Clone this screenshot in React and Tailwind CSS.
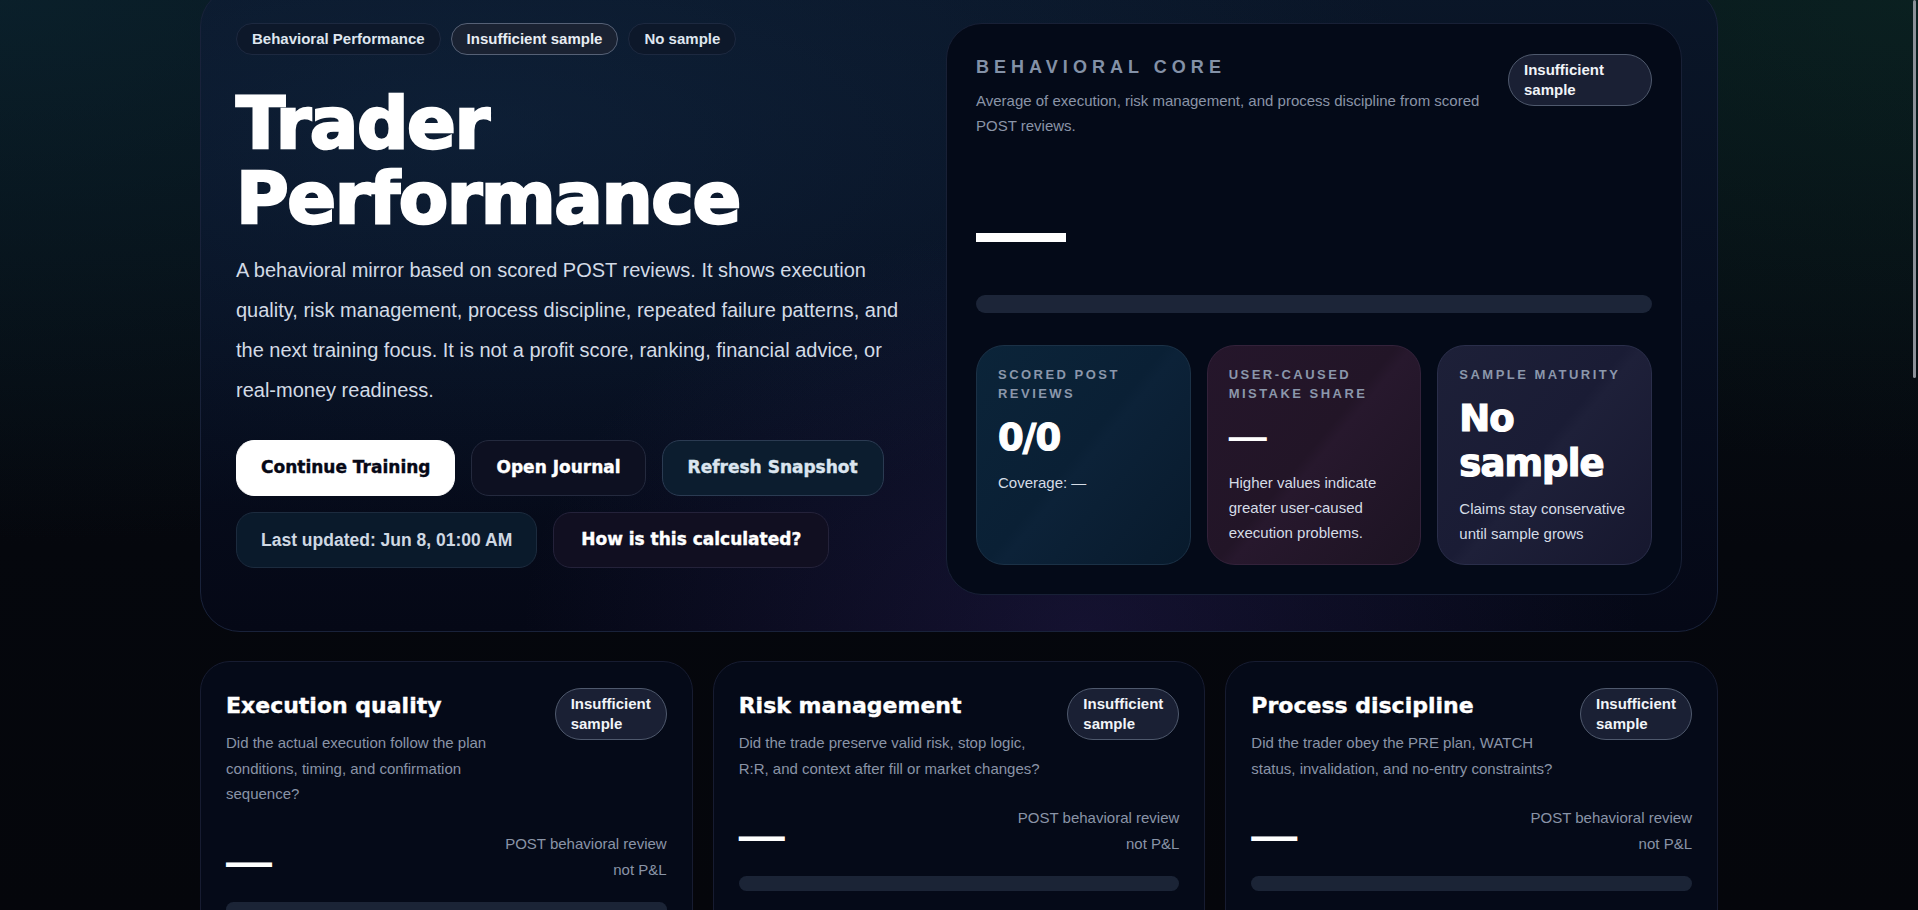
import React from 'react';

const heavy = "font-['DejaVu_Sans',sans-serif] font-bold";

const pills = [
  { label: 'Behavioral Performance', tone: 'border-[#1d2940] bg-[#0d182a] text-[#dfe6ef]' },
  { label: 'Insufficient sample', tone: 'border-[#566176] bg-[#1a2232] text-[#e8edf3]' },
  { label: 'No sample', tone: 'border-[#1d2940] bg-[#0d182a] text-[#dfe6ef]' },
];

const tiles = [
  {
    label: 'Scored POST reviews',
    value: '0/0',
    note: 'Coverage: —',
    tone: 'border-[#1b3146] bg-[linear-gradient(130deg,#0b2439_0%,#0a2035_48%,#0c2238_52%,#081a2c_100%)]',
  },
  {
    label: 'User-caused mistake share',
    value: '—',
    note: 'Higher values indicate greater user-caused execution problems.',
    tone: 'border-[#33223a] bg-[linear-gradient(130deg,#25162b_0%,#221527_48%,#27182d_52%,#1c1322_100%)]',
  },
  {
    label: 'Sample maturity',
    value: 'No sample',
    note: 'Claims stay conservative until sample grows',
    tone: 'border-[#2a2e4a] bg-[linear-gradient(130deg,#1d2038_0%,#1a1c35_48%,#1e2039_52%,#16172e_100%)]',
  },
];

const dimensions = [
  {
    title: 'Execution quality',
    text: 'Did the actual execution follow the plan conditions, timing, and confirmation sequence?',
  },
  {
    title: 'Risk management',
    text: 'Did the trade preserve valid risk, stop logic, R:R, and context after fill or market changes?',
  },
  {
    title: 'Process discipline',
    text: 'Did the trader obey the PRE plan, WATCH status, invalidation, and no-entry constraints?',
  },
];

function SampleBadge({ width }) {
  return (
    <span className={`${width} shrink-0 rounded-[26px] border border-[#4f596d] bg-[#1a2034] px-[15px] py-[5px] text-[15px] font-bold leading-5 text-[#f1f4f8]`}>
      Insufficient sample
    </span>
  );
}

function DimensionCard({ title, text }) {
  return (
    <div className="rounded-[30px] border border-[#171c31] bg-[#050a18] px-[25px] pt-[26px] pb-8">
      <div className="flex items-start gap-6">
        <div className="min-w-0 flex-1">
          <h3 className={`${heavy} text-[22px] leading-[36px] text-white [-webkit-text-stroke:0.4px_currentColor]`}>{title}</h3>
          <p className="mt-1.5 text-[15px] leading-[25.5px] text-[#8a94a7]">{text}</p>
        </div>
        <SampleBadge width="w-[112px]" />
      </div>
      <div className="mt-6 flex items-end justify-between">
        <span className="text-[46px] font-bold leading-[44px] text-white">—</span>
        <p className="text-right text-[15px] leading-[26px] text-[#8a94a7]">
          POST behavioral review
          <br />
          not P&amp;L
        </p>
      </div>
      <div className="mt-[19px] h-[15px] rounded-full bg-[#1b2436]" />
    </div>
  );
}

export default function App() {
  return (
    <div className="relative h-screen overflow-hidden bg-[radial-gradient(ellipse_at_0%_0%,rgba(14,48,62,0.45),transparent_42%),radial-gradient(ellipse_at_100%_0%,rgba(16,58,44,0.35),transparent_36%),linear-gradient(180deg,#07121a_0%,#05070d_60%,#05060b_100%)] font-['Liberation_Sans',Arial,sans-serif] text-white">
      {/* scrollbar thumb */}
      <div className="fixed right-[2px] top-0 h-[378px] w-[3px] rounded-full bg-[#8c9199]" />

      <div className="mx-auto max-w-[1518px]">
        <section className="mt-[-13px] grid grid-cols-[minmax(0,1fr)_736px] gap-9 rounded-[40px] border border-[#19223a] bg-[radial-gradient(ellipse_at_58%_100%,rgba(76,52,140,0.22),transparent_45%),radial-gradient(ellipse_at_18%_22%,rgba(22,52,84,0.35),transparent_55%),linear-gradient(180deg,#0a1628_0%,#070f20_50%,#050816_100%)] pl-[35px] pr-[35px] pt-[35px] pb-[36px]">
          <div>
            <div className="flex gap-2.5">
              {pills.map((p) => (
                <span key={p.label} className={`flex h-8 items-center rounded-full border px-[15px] text-[15px] font-bold ${p.tone}`}>
                  {p.label}
                </span>
              ))}
            </div>

            <h1 className={`${heavy} mt-[31px] text-[72px] tracking-[-0.02em] text-white [-webkit-text-stroke:2.5px_currentColor]`}>
              <span className="block h-[75px] leading-[75px]">Trader</span>
              <span className="block h-[75px] leading-[75px]">Performance</span>
            </h1>

            <p className="mt-3.5 text-[20px] leading-10 text-[#d3dbe6]">
              A behavioral mirror based on scored POST reviews. It shows execution quality, risk management, process discipline, repeated failure patterns, and the next training focus. It is not a profit score, ranking, financial advice, or real-money readiness.
            </p>

            <div className="mt-[30px] flex flex-wrap gap-4">
              <button className={`${heavy} h-14 rounded-[18px] border border-white bg-white px-6 text-[17px] text-[#060816] [-webkit-text-stroke:0.4px_currentColor]`}>
                Continue Training
              </button>
              <button className={`${heavy} h-14 rounded-[18px] border border-[#242a3e] bg-[#0d1021] px-6 text-[17px] text-white [-webkit-text-stroke:0.4px_currentColor]`}>
                Open Journal
              </button>
              <button className={`${heavy} h-14 rounded-[18px] border border-[#2b3b52] bg-[#0c1d2f] px-[25px] text-[17px] text-[#dbe5ef] [-webkit-text-stroke:0.4px_currentColor]`}>
                Refresh Snapshot
              </button>
              <div className="flex h-14 items-center rounded-[18px] border border-[#1c2b3e] bg-[#0a1a2b] px-6 text-[17.5px] font-bold text-[#cfd8e3]">
                Last updated: Jun 8, 01:00 AM
              </div>
              <button className={`${heavy} h-14 rounded-[18px] border border-[#24223a] bg-[#110f21] px-[27px] text-[17px] text-white [-webkit-text-stroke:0.4px_currentColor]`}>
                How is this calculated?
              </button>
            </div>
          </div>

          <div className="rounded-[36px] border border-[#182036] bg-[#040a18] px-[29px] pt-[30px] pb-[29px]">
            <div className="flex items-start gap-5">
              <div className="min-w-0 flex-1">
                <h2 className="text-[18px] font-bold uppercase leading-[26px] tracking-[0.28em] text-[#8391a7]">
                  Behavioral Core
                </h2>
                <p className="mt-2 text-[15px] leading-[25px] text-[#8a94a7]">
                  Average of execution, risk management, and process discipline from scored POST reviews.
                </p>
              </div>
              <SampleBadge width="w-[144px]" />
            </div>

            <div className="mt-12 text-[90px] font-bold leading-[90px] text-white">—</div>
            <div className="mt-[19px] h-[18px] rounded-full bg-[#1c2538]" />

            <div className="mt-8 grid grid-cols-3 gap-4">
              {tiles.map((t) => (
                <div key={t.label} className={`h-[220px] rounded-[28px] border px-[21px] pt-[19px] ${t.tone}`}>
                  <div className="text-[13px] font-bold uppercase leading-[19px] tracking-[0.19em] text-[#8b97ab]">
                    {t.label}
                  </div>
                  {t.value === '—' ? (
                    <div className="mt-3 text-[38px] font-bold leading-[45px] text-white">—</div>
                  ) : (
                    <div className={`${heavy} mt-3 text-[37px] leading-[45px] tracking-[-0.025em] text-white [-webkit-text-stroke:1.2px_currentColor]`}>
                      {t.value}
                    </div>
                  )}
                  <p className="mt-2.5 text-[15px] leading-[25px] text-[#d5dce6]">{t.note}</p>
                </div>
              ))}
            </div>
          </div>
        </section>

        <div className="mt-[29px] grid grid-cols-3 gap-5">
          {dimensions.map((d) => (
            <DimensionCard key={d.title} title={d.title} text={d.text} />
          ))}
        </div>
      </div>
    </div>
  );
}
